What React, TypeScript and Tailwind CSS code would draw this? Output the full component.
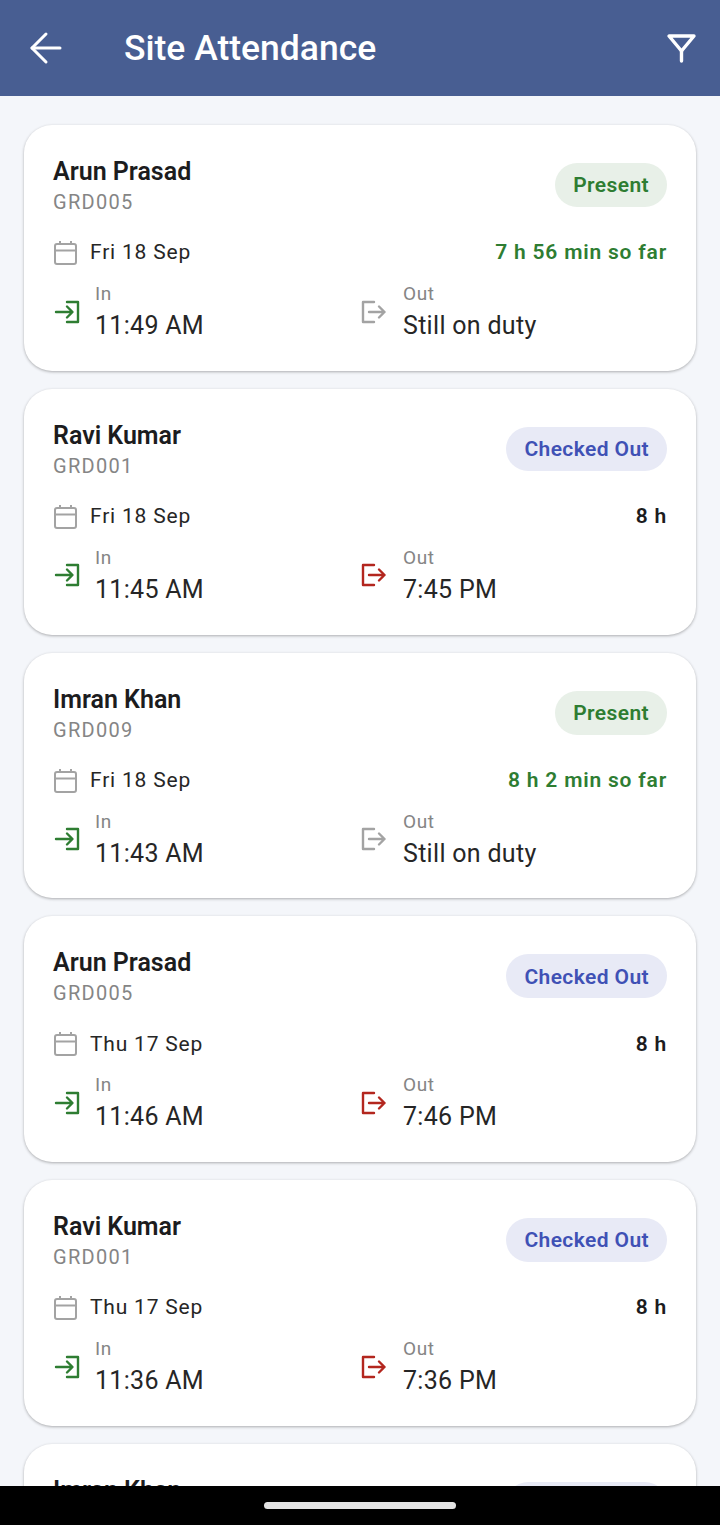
import { ArrowLeft } from "lucide-react";

const records = [
  { name: "Arun Prasad", code: "GRD005", date: "Fri 18 Sep", hours: "7 h 56 min so far", inTime: "11:49 AM", outTime: "Still on duty", present: true },
  { name: "Ravi Kumar", code: "GRD001", date: "Fri 18 Sep", hours: "8 h", inTime: "11:45 AM", outTime: "7:45 PM", present: false },
  { name: "Imran Khan", code: "GRD009", date: "Fri 18 Sep", hours: "8 h 2 min so far", inTime: "11:43 AM", outTime: "Still on duty", present: true },
  { name: "Arun Prasad", code: "GRD005", date: "Thu 17 Sep", hours: "8 h", inTime: "11:46 AM", outTime: "7:46 PM", present: false },
  { name: "Ravi Kumar", code: "GRD001", date: "Thu 17 Sep", hours: "8 h", inTime: "11:36 AM", outTime: "7:36 PM", present: false },
  { name: "Imran Khan", code: "GRD009", date: "Thu 17 Sep", hours: "8 h", inTime: "11:40 AM", outTime: "7:40 PM", present: false },
];

const FilterIcon = () => (
  <svg width="30" height="30" viewBox="0 0 30 30" fill="none" stroke="white" strokeWidth="3.4" strokeLinejoin="round" strokeLinecap="round" className="ml-auto shrink-0">
    <path d="M3 3h25L15.5 18Z" />
    <path d="M15.5 18v10" />
  </svg>
);

const CalendarIcon = () => (
  <svg width="26" height="26" viewBox="0 0 26 26" fill="none" stroke="#a3a3a3" strokeWidth="2" className="shrink-0">
    <rect x="2" y="4" width="21" height="20" rx="2" />
    <path d="M2 10.5h21M7 1v3M18 1v3" />
  </svg>
);

const InIcon = () => (
  <svg width="28" height="28" viewBox="0 0 28 28" fill="none" stroke="#2e7d32" strokeWidth="2.4" strokeLinecap="round" strokeLinejoin="round" className="mb-[3px] shrink-0">
    <path d="M14 4h11v20H14" />
    <path d="M3 14h16M14 8.5l5.5 5.5-5.5 5.5" />
  </svg>
);

const OutIcon = ({ color }: { color: string }) => (
  <svg width="28" height="28" viewBox="0 0 28 28" fill="none" stroke={color} strokeWidth="2.4" strokeLinecap="round" strokeLinejoin="round" className="mb-[3px] shrink-0">
    <path d="M15 4H4v20h11" />
    <path d="M10 14h15.5M20 8.5l5.5 5.5-5.5 5.5" />
  </svg>
);

const AttendanceCard = ({ record }: { record: (typeof records)[number] }) => {
  return (
    <div className="h-[245.75px] shrink-0 rounded-[28px] bg-white px-[29px] pt-[30px] shadow-[0_1px_3px_rgba(0,0,0,0.3)]">
      <div className="flex items-start justify-between">
        <div>
          <div className="text-[25px] leading-[34px] font-semibold text-[#1c1c1e]">{record.name}</div>
          <div className="-mt-px text-[20px] leading-[28px] tracking-[1.3px] text-[#858585]">{record.code}</div>
        </div>
        <div
          className={
            record.present
              ? "mt-[8px] flex h-[44px] items-center rounded-full bg-[#e8f0e8] px-[18px] pt-[2px] text-[21px] font-semibold tracking-[0.4px] text-[#2e7d32]"
              : "mt-[8px] flex h-[44px] items-center rounded-full bg-[#e8eaf6] px-[18px] pt-[2px] text-[21px] font-semibold tracking-[0.4px] text-[#3f51b5]"
          }
        >
          {record.present ? "Present" : "Checked Out"}
        </div>
      </div>
      <div className="mt-[23px] flex h-[28px] items-center justify-between">
        <div className="flex items-center gap-[11px]">
          <CalendarIcon />
          <span className="text-[21px] tracking-[0.8px] text-[#262626]">{record.date}</span>
        </div>
        <span
          className={
            record.present
              ? "text-[21px] font-semibold tracking-[0.8px] text-[#2e7d32]"
              : "text-[21px] font-semibold tracking-[0.8px] text-[#1c1c1e]"
          }
        >
          {record.hours}
        </span>
      </div>
      <div className="mt-[14px] grid grid-cols-2">
        <div className="flex items-center gap-[14px]">
          <InIcon />
          <div>
            <div className="text-[19px] leading-[26px] tracking-[0.6px] text-[#858585]">In</div>
            <div className="text-[25px] leading-[38px] tracking-[0.3px] text-[#262626]">{record.inTime}</div>
          </div>
        </div>
        <div className="ml-[-1px] flex items-center gap-[16px]">
          <OutIcon color={record.present ? "#a3a3a3" : "#b3261e"} />
          <div>
            <div className="text-[19px] leading-[26px] tracking-[0.6px] text-[#858585]">Out</div>
            <div className="text-[25px] leading-[38px] tracking-[0.3px] text-[#262626]">{record.outTime}</div>
          </div>
        </div>
      </div>
    </div>
  );
};

const App = () => {
  return (
    <div className="flex h-[1525px] w-[720px] flex-col overflow-hidden bg-[#f4f6fa] font-['Roboto',sans-serif]">
      <header className="flex h-[96px] shrink-0 items-center bg-[#485e92] pl-[22px] pr-[24px] text-white">
        <ArrowLeft size={48} strokeWidth={1.5} />
        <h1 className="ml-[54px] pt-[2px] text-[35.5px] font-medium">Site Attendance</h1>
        <FilterIcon />
      </header>
      <main className="flex min-h-0 flex-1 flex-col gap-[18px] overflow-hidden px-[24px] pt-[29px]">
        {records.map((record, index) => (
          <AttendanceCard key={index} record={record} />
        ))}
      </main>
      <footer className="flex h-[39px] shrink-0 items-center justify-center bg-black">
        <div className="h-[7px] w-[192px] rounded-full bg-[#e4e4e4]" />
      </footer>
    </div>
  );
};

export default App;
